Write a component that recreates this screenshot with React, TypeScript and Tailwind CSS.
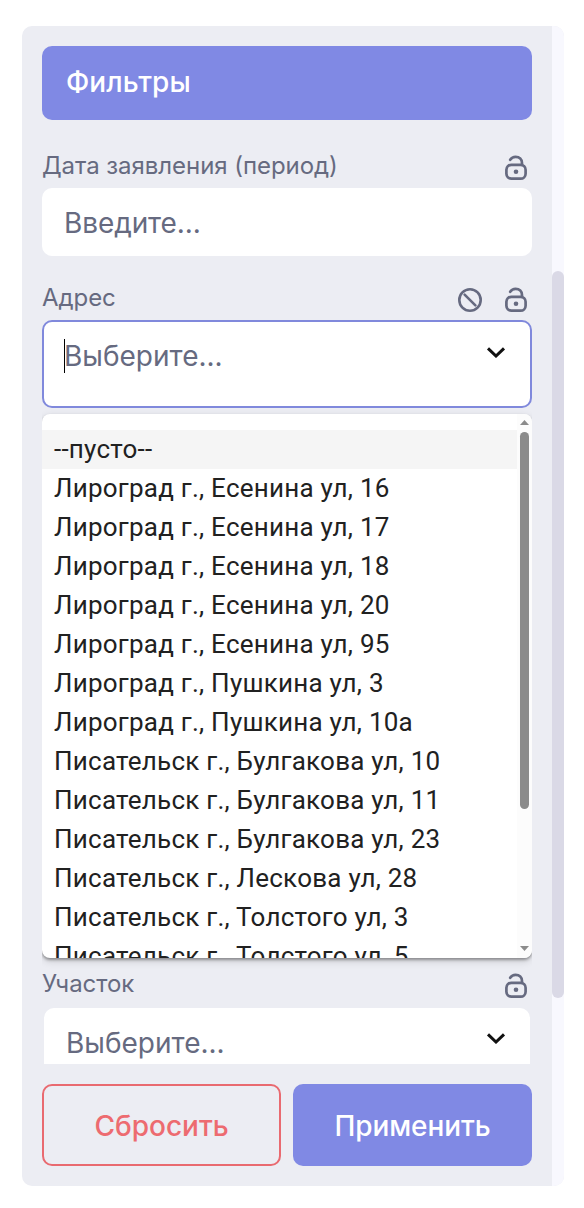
import { useState } from "react";

const ADDRESSES = [
  "--пусто--",
  "Лироград г., Есенина ул, 16",
  "Лироград г., Есенина ул, 17",
  "Лироград г., Есенина ул, 18",
  "Лироград г., Есенина ул, 20",
  "Лироград г., Есенина ул, 95",
  "Лироград г., Пушкина ул, 3",
  "Лироград г., Пушкина ул, 10а",
  "Писательск г., Булгакова ул, 10",
  "Писательск г., Булгакова ул, 11",
  "Писательск г., Булгакова ул, 23",
  "Писательск г., Лескова ул, 28",
  "Писательск г., Толстого ул, 3",
  "Писательск г., Толстого ул, 5",
];

function UnlockIcon() {
  return (
    <svg className="h-7 w-6" viewBox="0 0 24 28" fill="none" stroke="currentColor" strokeWidth={2.7} strokeLinecap="round">
      <rect x="2.4" y="10.8" width="19.2" height="13.9" rx="5" />
      <path d="M6.2 5.8C7.4 3.9 9.2 2.8 11.6 2.8c3.8 0 6.4 2.6 6.4 6.2v1.8" />
      <circle cx="12" cy="17.8" r="2.3" fill="currentColor" stroke="none" />
    </svg>
  );
}

function BanIcon() {
  return (
    <svg className="h-7 w-6" viewBox="0 0 24 28" fill="none" stroke="currentColor" strokeWidth={2.6} strokeLinecap="round">
      <circle cx="12" cy="14" r="10.7" />
      <path d="M6.6 8.6l10.8 10.8" />
    </svg>
  );
}

function ChevronIcon() {
  return (
    <svg className="h-3 w-5 text-[#111]" viewBox="0 0 20 12" fill="none" stroke="currentColor" strokeWidth={3}>
      <path d="M2 2.4l8 7.6 8-7.6" />
    </svg>
  );
}

function FieldLabel({ text, clearable }: { text: string; clearable?: boolean }) {
  return (
    <div className="flex h-8 items-center justify-between pr-1 text-[#666a80]">
      <span className="text-2xl leading-8 tracking-[-0.05px]">{text}</span>
      <span className="flex gap-[22px] pt-1">
        {clearable && <BanIcon />}
        <UnlockIcon />
      </span>
    </div>
  );
}

function AddressList({ active, onSelect }: { active: number; onSelect: (i: number) => void }) {
  return (
    <div className="absolute top-full right-0 left-0 z-10 mt-1.5 flex h-[544px] overflow-hidden rounded-lg bg-white shadow-[0_2px_3px_rgba(0,0,0,0.35),0_3px_8px_rgba(0,0,0,0.14)]">
      <ul className="flex-1 pt-4 font-[Roboto,sans-serif] text-[26px] leading-[39px] tracking-[0.24px] text-[#212121]">
        {ADDRESSES.map((address, i) => (
          <li key={address} onClick={() => onSelect(i)} className={`h-[39px] pl-3 whitespace-nowrap ${i === active ? "bg-[#f5f5f5]" : ""}`}>
            {address}
          </li>
        ))}
      </ul>
      <div className="flex w-[15px] flex-col items-center bg-[#fcfcfc] pt-1.5 pb-[7px]">
        <svg className="h-[5px] w-[9px] text-[#8b8b8b]" viewBox="0 0 9 5" fill="currentColor"><path d="M0 5L4.5 0 9 5z" /></svg>
        <div className="mt-[7px] h-[377px] w-[9px] rounded-full bg-[#8b8b8b]" />
        <svg className="mt-auto h-[5px] w-[9px] text-[#8b8b8b]" viewBox="0 0 9 5" fill="currentColor"><path d="M0 0l4.5 5L9 0z" /></svg>
      </div>
    </div>
  );
}

export default function App() {
  const [active, setActive] = useState(0);

  return (
    <div className="h-[1208px] w-[584px] bg-white px-[22px] pt-[26px] font-[Inter,sans-serif]">
      <div className="flex h-[1160px] w-[542px] overflow-hidden rounded-[10px] bg-[#ecedf3]">
        <div className="flex w-[530px] flex-col p-5">
          <div className="h-[1018px] shrink-0 overflow-hidden">
            <h1 className="h-[74px] rounded-[10px] bg-[#8089e4] pl-6 text-[28px] leading-[73px] font-medium tracking-[0.1px] text-white">Фильтры</h1>

            <div className="mt-[30px]">
              <FieldLabel text="Дата заявления (период)" />
              <div className="mt-1.5 h-[68px] rounded-[10px] bg-white pl-[22px] text-[28px] leading-[70px] tracking-[-0.1px] text-[#666a80]">Введите...</div>
            </div>

            <div className="mt-[26px]">
              <FieldLabel text="Адрес" clearable />
              <div className="relative mt-1.5 h-[88px]">
                <div className="flex h-full justify-between rounded-[10px] border-2 border-[#8089dc] bg-white pr-6 pl-5">
                  <div className="mt-[17px] flex h-[34px] items-center text-[28px] text-[#666a80]">
                    <span className="-mr-px h-[34px] w-px bg-black" />
                    Выберите...
                  </div>
                  <span className="mt-[24px]"><ChevronIcon /></span>
                </div>
                <AddressList active={active} onSelect={setActive} />
              </div>
            </div>

            {/* the open list covers the fields in between */}
            <div className="mt-[560px]">
              <FieldLabel text="Участок" />
              <div className="mx-0.5 mt-2 flex h-[84px] justify-between rounded-[10px] bg-white pr-6 pl-[22px]">
                <span className="mt-[18px] text-[28px] leading-[34px] text-[#666a80]">Выберите...</span>
                <span className="mt-[24px]"><ChevronIcon /></span>
              </div>
            </div>
          </div>

          <div className="mt-5 flex gap-3 text-[28px] leading-none">
            <button className="h-[82px] w-[239px] rounded-[10px] border-2 border-[#e96a70] pt-px font-medium text-[#ed6b70]">Сбросить</button>
            <button className="h-[82px] w-[239px] rounded-[10px] bg-[#8089e4] pt-px font-medium tracking-[-0.1px] text-white">Применить</button>
          </div>
        </div>

        <div className="w-3 bg-[#f8f8fe] pt-[245px]">
          <div className="h-[727px] rounded-full bg-[#dad9e6]" />
        </div>
      </div>
    </div>
  );
}
